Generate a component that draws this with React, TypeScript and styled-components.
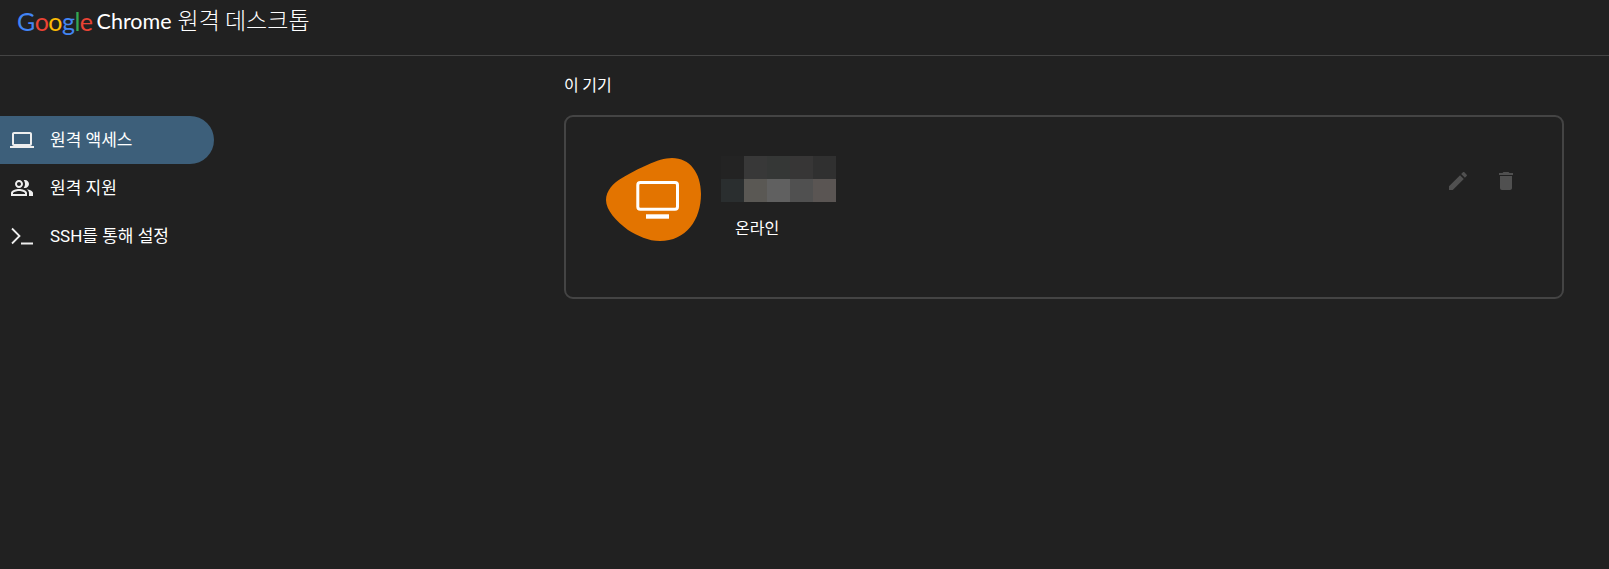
import styled, { createGlobalStyle } from "styled-components";

const GlobalStyle = createGlobalStyle`
  html, body {
    margin: 0;
    background: #212121;
    color: #fff;
    font-family: Roboto, "Noto Sans CJK KR", sans-serif;
  }
`;

const Page = styled.div`
  width: 1609px;
  height: 569px;
  overflow: hidden;
  background: #212121;
`;

const Header = styled.header`
  height: 56px;
  box-sizing: border-box;
  border-bottom: 1px solid #444;
  padding: 6px 0 0 17px;
  display: flex;
  align-items: flex-start;
  gap: 4px;
  white-space: nowrap;
`;

const GoogleWord = styled.span`
  font-family: Lato, sans-serif;
  font-size: 25px;
  line-height: 30px;
  letter-spacing: -0.5px;
`;

const Letter = styled.span<{ $color: string }>`
  color: ${(props) => props.$color};
`;

const ChromeWord = styled.span`
  font-family: Lato, sans-serif;
  font-size: 21.5px;
  line-height: 31px;
  color: #fff;
`;

const Title = styled.span`
  font-family: "Noto Sans CJK KR", sans-serif;
  font-size: 23px;
  line-height: 27px;
  font-weight: 300;
  margin-left: 2px;
`;

const Body = styled.div`
  display: flex;
`;

const Sidebar = styled.nav`
  width: 214px;
  padding-top: 60px;
  flex: none;
`;

const NavItem = styled.div<{ $active?: boolean }>`
  height: 48px;
  display: flex;
  align-items: center;
  gap: 16px;
  padding-left: 10px;
  border-radius: 0 24px 24px 0;
  background: ${(props) => (props.$active ? "#3d5f7a" : "transparent")};
  font-size: 17px;
  color: #fff;
  white-space: nowrap;
`;

const NavLabel = styled.span`
  margin-bottom: 4px;
`;

const NavIcon = styled.svg`
  width: 24px;
  height: 24px;
  fill: #eeeeee;
  flex: none;
`;

const TerminalIcon = styled(NavIcon)`
  fill: none;
  stroke: #eeeeee;
  stroke-width: 1.8;
`;

const Content = styled.main`
  margin-left: 350px;
  width: 1000px;
`;

const SectionTitle = styled.h2`
  margin: 0;
  height: 59px;
  padding-top: 17px;
  box-sizing: border-box;
  font-size: 16px;
  line-height: 22px;
  font-weight: 400;
  font-family: "Noto Sans CJK KR", sans-serif;
`;

const Card = styled.section`
  height: 184px;
  box-sizing: border-box;
  border: 2px solid #444;
  border-radius: 9px;
  padding: 39px 44px 0 40px;
  display: flex;
  align-items: flex-start;
`;

const Blob = styled.svg`
  width: 95px;
  height: 83px;
  margin-top: 2px;
  flex: none;
`;

const Info = styled.div`
  margin-left: 20px;
  display: flex;
  flex-direction: column;
`;

const Mosaic = styled.div`
  display: grid;
  grid-template-columns: repeat(5, 23px);
  grid-auto-rows: 23px;
`;

const MosaicCell = styled.div<{ $color: string }>`
  background: ${(props) => props.$color};
`;

const Status = styled.div`
  margin: 14px 0 0 14px;
  font-size: 16px;
  line-height: 22px;
  font-family: "Noto Sans CJK KR", sans-serif;
`;

const Actions = styled.div`
  margin-left: auto;
  margin-top: 13px;
  display: flex;
  gap: 24px;
`;

const ActionIcon = styled.svg`
  width: 24px;
  height: 24px;
  fill: #505050;
`;

const googleLetters: [string, string][] = [
  ["G", "#4285f4"],
  ["o", "#ea4335"],
  ["o", "#fbbc05"],
  ["g", "#4285f4"],
  ["l", "#34a853"],
  ["e", "#ea4335"],
];

const mosaic = [
  "#232323", "#383838", "#353736", "#373636", "#303030",
  "#2a2e2f", "#5a5854", "#606060", "#505050", "#5a5553",
];

function App() {
  return (
    <Page>
      <GlobalStyle />
      <Header>
        <GoogleWord>
          {googleLetters.map(([letter, color], i) => (
            <Letter key={i} $color={color}>
              {letter}
            </Letter>
          ))}
        </GoogleWord>
        <ChromeWord>Chrome</ChromeWord>
        <Title>원격 데스크톱</Title>
      </Header>
      <Body>
        <Sidebar>
          <NavItem $active>
            <NavIcon viewBox="0 0 24 24">
              <path d="M20 18c1.1 0 1.99-.9 1.99-2L22 6c0-1.1-.9-2-2-2H4c-1.1 0-2 .9-2 2v10c0 1.1.9 2 2 2H0v2h24v-2h-4zM4 6h16v10H4V6z" />
            </NavIcon>
            <NavLabel>원격 액세스</NavLabel>
          </NavItem>
          <NavItem>
            <NavIcon viewBox="0 0 24 24">
              <path d="M16.67 13.13C18.04 14.06 19 15.32 19 17v3h4v-3c0-2.18-3.57-3.47-6.33-3.87z" />
              <path d="M15 12c2.21 0 4-1.79 4-4s-1.79-4-4-4c-.47 0-.91.1-1.33.24C14.5 5.27 15 6.58 15 8s-.5 2.73-1.33 3.76c.42.14.86.24 1.33.24z" />
              <path d="M9 12c2.21 0 4-1.79 4-4s-1.79-4-4-4-4 1.79-4 4 1.79 4 4 4zm0-6c1.1 0 2 .9 2 2s-.9 2-2 2-2-.9-2-2 .9-2 2-2z" />
              <path d="M9 13c-2.67 0-8 1.34-8 4v3h16v-3c0-2.66-5.33-4-8-4zm6 5H3v-.99C3.2 16.29 6.3 15 9 15s5.8 1.29 6 2z" />
            </NavIcon>
            <NavLabel>원격 지원</NavLabel>
          </NavItem>
          <NavItem>
            <TerminalIcon viewBox="0 0 24 24">
              <path d="M2 4.5 9.5 12 2 19.5M11 19.5h12" />
            </TerminalIcon>
            <NavLabel>SSH를 통해 설정</NavLabel>
          </NavItem>
        </Sidebar>
        <Content>
          <SectionTitle>이 기기</SectionTitle>
          <Card>
            <Blob viewBox="0 0 95 83">
              <path
                fill="#e37400"
                d="M0 42C0 33 7 25 16 20 32 11 52 0 66 0 84 0 95 15 95 36 95 62 80 83 54 83 42 83 32 78 22 72 10 63 0 52 0 42Z"
              />
              <rect x="31.8" y="24.5" width="39.7" height="26.7" rx="2.5" fill="none" stroke="#fff" strokeWidth="3" />
              <rect x="40" y="56.3" width="23" height="4.4" fill="#fff" />
            </Blob>
            <Info>
              <Mosaic>
                {mosaic.map((color, i) => (
                  <MosaicCell key={i} $color={color} />
                ))}
              </Mosaic>
              <Status>온라인</Status>
            </Info>
            <Actions>
              <ActionIcon viewBox="0 0 24 24">
                <path d="M3 17.25V21h3.75L17.81 9.94l-3.75-3.75L3 17.25zM20.71 7.04c.39-.39.39-1.02 0-1.41l-2.34-2.34c-.39-.39-1.02-.39-1.41 0l-1.83 1.83 3.75 3.75 1.83-1.83z" />
              </ActionIcon>
              <ActionIcon viewBox="0 0 24 24">
                <path d="M6 19c0 1.1.9 2 2 2h8c1.1 0 2-.9 2-2V7H6v12zM19 4h-3.5l-1-1h-5l-1 1H5v2h14V4z" />
              </ActionIcon>
            </Actions>
          </Card>
        </Content>
      </Body>
    </Page>
  );
}

export default App;
